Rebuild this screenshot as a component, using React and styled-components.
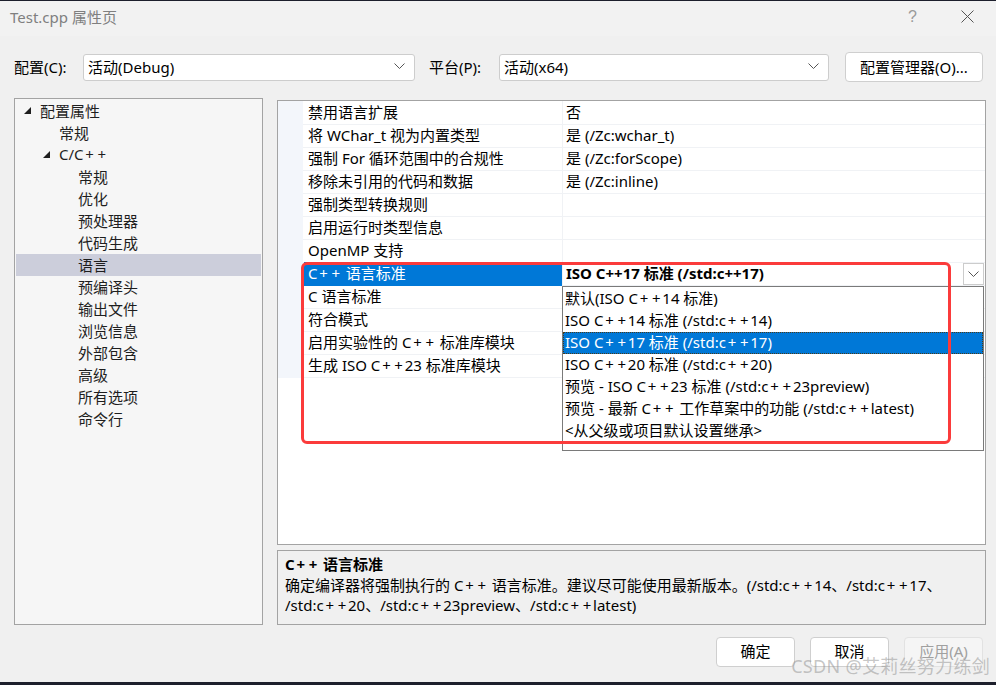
import React from "react";
import styled, { createGlobalStyle, css } from "styled-components";

const FONT = `"Noto Sans", "Noto Sans CJK SC", sans-serif`;

const GlobalStyle = createGlobalStyle`
  html, body { margin: 0; padding: 0; }
  body { background: #1d1f2c; font-family: ${FONT}; color: #000; }
  * { box-sizing: border-box; }
`;

const Screen = styled.div`
  width: 996px;
  height: 685px;
  padding-top: 1px;
  background: #1d1f2c;
  overflow: hidden;
`;

const Window = styled.div`
  position: relative;
  height: 681px;
  background: #f0f0f0;
  border-top-left-radius: 8px;
  display: flex;
  flex-direction: column;
  font-size: 15px;
`;

const TitleBar = styled.div`
  height: 35px;
  display: flex;
  align-items: center;
  padding: 0 0 4px 10px;
  background: #f2f2f2;
`;

const Title = styled.div`
  color: #7f7f7f;
  font-size: 15px;
`;

const TitleButtons = styled.div`
  margin-left: auto;
  display: flex;
  align-items: center;
  gap: 44px;
  padding-right: 22px;
`;

const Help = styled.span`
  color: #9a9a9a;
  font-size: 16px;
  font-family: "Liberation Sans", sans-serif;
`;

const Toolbar = styled.div`
  display: flex;
  align-items: center;
  height: 30px;
  margin-top: 16px;
  padding-left: 14px;
`;

const FieldLabel = styled.span`
  width: ${(p) => p.$w}px;
  padding-bottom: 2px;
  white-space: nowrap;
`;

const Combo = styled.div`
  width: ${(p) => p.$w}px;
  height: 27px;
  background: #fff;
  border: 1px solid #cdcdcd;
  border-radius: 3px;
  display: flex;
  align-items: center;
  justify-content: space-between;
  padding: 0 9px 2px 4px;
  margin-right: ${(p) => p.$mr || 0}px;
`;

const PushButton = styled.button`
  font-family: ${FONT};
  font-size: 15px;
  height: 30px;
  width: ${(p) => p.$w}px;
  background: ${(p) => (p.disabled ? "#f5f5f5" : "#fff")};
  color: ${(p) => (p.disabled ? "#a0a0a0" : "#000")};
  border: 1px solid ${(p) => (p.disabled ? "#e2e2e2" : "#cfcfcf")};
  border-radius: 4px;
  padding: 0 0 ${(p) => p.$pb ?? 4}px;
  margin-left: ${(p) => p.$ml || 0}px;
`;

const Main = styled.div`
  display: flex;
  gap: 14px;
  margin-top: 16px;
  padding-left: 14px;
  height: 527px;
`;

const TreePanel = styled.div`
  width: 249px;
  border: 1px solid #a3a3a3;
  background: #f6f6f6;
  padding-top: 1px;
`;

const TreeRow = styled.div`
  height: 22px;
  display: flex;
  align-items: center;
  margin: 0 1px;
  padding-left: ${(p) => p.$indent}px;
  padding-bottom: 2px;
  color: #1e1e1e;
  background: ${(p) => (p.$selected ? "#cccedb" : "transparent")};
`;

const Expander = styled.span`
  width: 16px;
  display: inline-flex;
  align-items: center;
  margin-left: -16px;
  padding-top: 1px;
`;

const Plus = styled.span`
  margin: 0 1.8px;
`;

const RightColumn = styled.div`
  width: 709px;
  display: flex;
  flex-direction: column;
`;

const GridPanel = styled.div`
  position: relative;
  margin-top: 2px;
  height: 446px;
  border: 1px solid #a3a3a3;
  background: #fff;
`;

const PropRow = styled.div`
  display: grid;
  grid-template-columns: 25px 259px 1fr;
  height: 23px;
`;

const Gutter = styled.div`
  background: #f3f6fb;
`;

const NameCell = styled.div`
  display: flex;
  align-items: center;
  padding: 0 0 2px 5px;
  border-bottom: 1px solid #f0f2f5;
  white-space: nowrap;
  ${(p) =>
    p.$selected &&
    css`
      background: #0078d7;
      color: #fff;
      margin-left: 1px;
      padding-left: 4px;
      border-bottom-color: #0078d7;
    `}
`;

const ValueCell = styled.div`
  display: flex;
  align-items: center;
  padding: 0 0 2px 3px;
  border-left: 1px solid #f0f2f5;
  border-bottom: 1px solid #f0f2f5;
  white-space: nowrap;
  font-weight: ${(p) => (p.$bold ? 700 : 400)};
`;

const DropButton = styled.div`
  position: absolute;
  left: 685px;
  top: 162px;
  width: 21px;
  height: 22px;
  border: 1px solid #cccccc;
  background: #fff;
  display: flex;
  align-items: center;
  justify-content: center;
`;

const DropList = styled.div`
  position: absolute;
  left: 284px;
  top: 185px;
  width: 422px;
  height: 165px;
  background: #fff;
  border: 1px solid #7a7a7a;
  padding-top: 1px;
`;

const DropItem = styled.div`
  height: 22px;
  display: flex;
  align-items: center;
  padding: 0 0 4px 2px;
  white-space: nowrap;
  ${(p) =>
    p.$selected &&
    css`
      background: #0078d7;
      color: #fff;
      outline: 1px dotted #4a3a1a;
      outline-offset: -1px;
    `}
`;

const Annotation = styled.div`
  position: absolute;
  left: 23px;
  top: 161px;
  width: 650px;
  height: 182px;
  border: 3.5px solid #fb3b3b;
  border-radius: 6px;
  pointer-events: none;
`;

const DescPanel = styled.div`
  margin-top: 5px;
  height: 75px;
  border: 1px solid #a3a3a3;
  background: #f0f0f0;
  padding: 2px 7px 0;
`;

const DescTitle = styled.div`
  font-weight: 700;
  line-height: 22px;
  margin-bottom: 1px;
`;

const DescText = styled.div`
  line-height: 19.5px;
`;

const Footer = styled.div`
  display: flex;
  justify-content: flex-end;
  padding-right: 13px;
  margin-top: 12px;
`;

const Watermark = styled.div`
  position: absolute;
  right: 6px;
  bottom: 4px;
  font-size: 18px;
  color: rgba(150, 150, 150, 0.55);
  letter-spacing: 0.3px;
  pointer-events: none;
  white-space: nowrap;
`;

const Chevron = () => (
  <svg width="11" height="6" viewBox="0 0 11 6">
    <polyline points="0.5,0.5 5.5,5.5 10.5,0.5" fill="none" stroke="#555" strokeWidth="1" />
  </svg>
);

const Triangle = () => (
  <svg width="7" height="7" viewBox="0 0 7 7">
    <polygon points="7,0 7,7 0,7" fill="#1e1e1e" />
  </svg>
);

const CloseIcon = () => (
  <svg width="13" height="13" viewBox="0 0 13 13">
    <line x1="0.5" y1="0.5" x2="12.5" y2="12.5" stroke="#555" strokeWidth="1" />
    <line x1="12.5" y1="0.5" x2="0.5" y2="12.5" stroke="#555" strokeWidth="1" />
  </svg>
);

// Widen the "+" glyph to match the reference's UI font.
const t = (s) =>
  s.split(/(\+)/).map((part, i) => (part === "+" ? <Plus key={i}>+</Plus> : part));

const tree = [
  { label: "配置属性", indent: 24, expanded: true },
  { label: "常规", indent: 43 },
  { label: "C/C++", indent: 43, expanded: true },
  { label: "常规", indent: 62 },
  { label: "优化", indent: 62 },
  { label: "预处理器", indent: 62 },
  { label: "代码生成", indent: 62 },
  { label: "语言", indent: 62, selected: true },
  { label: "预编译头", indent: 62 },
  { label: "输出文件", indent: 62 },
  { label: "浏览信息", indent: 62 },
  { label: "外部包含", indent: 62 },
  { label: "高级", indent: 62 },
  { label: "所有选项", indent: 62 },
  { label: "命令行", indent: 62 },
];

const props = [
  ["禁用语言扩展", "否"],
  ["将 WChar_t 视为内置类型", "是 (/Zc:wchar_t)"],
  ["强制 For 循环范围中的合规性", "是 (/Zc:forScope)"],
  ["移除未引用的代码和数据", "是 (/Zc:inline)"],
  ["强制类型转换规则", ""],
  ["启用运行时类型信息", ""],
  ["OpenMP 支持", ""],
  ["C++ 语言标准", "ISO C++17 标准 (/std:c++17)", true],
  ["C 语言标准", ""],
  ["符合模式", ""],
  ["启用实验性的 C++ 标准库模块", ""],
  ["生成 ISO C++23 标准库模块", ""],
];

const options = [
  "默认(ISO C++14 标准)",
  "ISO C++14 标准 (/std:c++14)",
  "ISO C++17 标准 (/std:c++17)",
  "ISO C++20 标准 (/std:c++20)",
  "预览 - ISO C++23 标准 (/std:c++23preview)",
  "预览 - 最新 C++ 工作草案中的功能 (/std:c++latest)",
  "<从父级或项目默认设置继承>",
];

export default function App() {
  return (
    <>
      <GlobalStyle />
      <Screen>
        <Window>
          <TitleBar>
            <Title>Test.cpp 属性页</Title>
            <TitleButtons>
              <Help>?</Help>
              <CloseIcon />
            </TitleButtons>
          </TitleBar>

          <Toolbar>
            <FieldLabel $w={69}>配置(C):</FieldLabel>
            <Combo $w={332} $mr={14}>
              <span>活动(Debug)</span>
              <Chevron />
            </Combo>
            <FieldLabel $w={70}>平台(P):</FieldLabel>
            <Combo $w={330}>
              <span>活动(x64)</span>
              <Chevron />
            </Combo>
            <PushButton $w={138} $ml={16} $pb={2}>配置管理器(O)...</PushButton>
          </Toolbar>

          <Main>
            <TreePanel>
              {tree.map((item, i) => (
                <TreeRow key={i} $indent={item.indent} $selected={item.selected}>
                  {item.expanded && (
                    <Expander>
                      <Triangle />
                    </Expander>
                  )}
                  <span>{t(item.label)}</span>
                </TreeRow>
              ))}
            </TreePanel>

            <RightColumn>
              <GridPanel>
                {props.map(([name, value, sel], i) => (
                  <PropRow key={i}>
                    <Gutter />
                    <NameCell $selected={sel}>
                      <span>{t(name)}</span>
                    </NameCell>
                    <ValueCell $bold={sel}>{value}</ValueCell>
                  </PropRow>
                ))}
                <DropButton>
                  <Chevron />
                </DropButton>
                <DropList>
                  {options.map((o, i) => (
                    <DropItem key={i} $selected={i === 2}>
                      <span>{t(o)}</span>
                    </DropItem>
                  ))}
                </DropList>
                <Annotation />
              </GridPanel>

              <DescPanel>
                <DescTitle>{t("C++ 语言标准")}</DescTitle>
                <DescText>
                  {t("确定编译器将强制执行的 C++ 语言标准。建议尽可能使用最新版本。(/std:c++14、/std:c++17、")}
                  <br />
                  {t("/std:c++20、/std:c++23preview、/std:c++latest)")}
                </DescText>
              </DescPanel>
            </RightColumn>
          </Main>

          <Footer>
            <PushButton $w={79}>确定</PushButton>
            <PushButton $w={79} $ml={15}>取消</PushButton>
            <PushButton $w={79} $ml={15} disabled>应用(A)</PushButton>
          </Footer>

          <Watermark>CSDN @艾莉丝努力练剑</Watermark>
        </Window>
      </Screen>
    </>
  );
}
